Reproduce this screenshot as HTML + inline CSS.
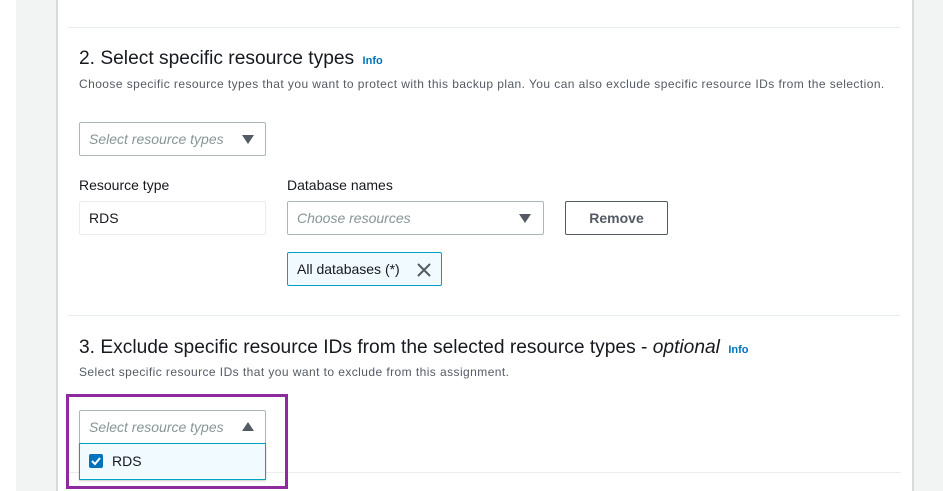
<!DOCTYPE html>
<html><head><style>
body{margin:0;width:943px;height:491px;overflow:hidden;background:#fff;font-family:"Liberation Sans",sans-serif;position:relative;color:#16191f}
.a{position:absolute}
.box{position:absolute;box-sizing:border-box;border:1px solid #aab7b8;border-radius:2px;background:#fff}
.ph{font-style:italic;color:#879596;font-size:14px;position:absolute;left:9px;top:8px}
.tri{position:absolute;width:0;height:0;border-left:6px solid transparent;border-right:6px solid transparent}
h{position:absolute;font-size:19.2px;color:#16191f;white-space:nowrap}
.info{font-size:11px;font-weight:bold;color:#0073bb}
.desc{position:absolute;font-size:12px;letter-spacing:0.43px;color:#545b64;white-space:nowrap}
.lbl{position:absolute;font-size:14px;color:#16191f}
</style></head><body>
<div class="a" style="left:16px;top:0;width:40px;height:491px;background:#f2f3f3"></div>
<div class="a" style="left:56px;top:0;width:2px;height:491px;background:#d5dbdb"></div>
<div class="a" style="left:912px;top:0;width:2px;height:491px;background:#d5dbdb"></div>
<div class="a" style="left:914px;top:0;width:29px;height:491px;background:#f2f3f3"></div>
<div class="a" style="left:68px;top:27px;width:833px;height:1px;background:#eaeded"></div>
<div class="a" style="left:68px;top:315px;width:833px;height:1px;background:#eaeded"></div>
<div class="a" style="left:68px;top:472px;width:833px;height:1px;background:#eaeded"></div>

<h style="left:79px;top:48px">2. Select specific resource types <span class="info">&nbsp;Info</span></h>
<div class="desc" style="left:79px;top:77px">Choose specific resource types that you want to protect with this backup plan. You can also exclude specific resource IDs from the selection.</div>
<div class="box" style="left:79px;top:122px;width:187px;height:34px"><span class="ph">Select resource types</span><div class="tri" style="left:162px;top:12px;border-top:9px solid #545b64"></div></div>
<div class="lbl" style="left:79px;top:177px">Resource type</div>
<div class="lbl" style="left:287px;top:177px">Database names</div>
<div class="box" style="left:79px;top:201px;width:187px;height:34px;border-color:#eaeded"><span style="position:absolute;left:9px;top:8px;font-size:14px">RDS</span></div>
<div class="box" style="left:287px;top:201px;width:257px;height:34px"><span class="ph">Choose resources</span><div class="tri" style="left:231px;top:12px;border-top:9px solid #545b64"></div></div>
<div class="box" style="left:565px;top:201px;width:103px;height:34px;border-color:#545b64"><span style="position:absolute;left:0;width:100%;text-align:center;top:8px;font-size:14px;font-weight:bold;color:#545b64">Remove</span></div>
<div class="box" style="left:287px;top:252px;width:155px;height:34px;border-color:#00a1c9;background:#f1faff"><span style="position:absolute;left:9px;top:8px;font-size:14px">All databases (*)</span>
<svg class="a" style="left:128px;top:9px" width="16" height="16"><path d="M2 2L14 14M14 2L2 14" stroke="#545b64" stroke-width="2"/></svg></div>

<h style="left:79px;top:337px">3. Exclude specific resource IDs from the selected resource types - <i>optional</i> <span class="info">&nbsp;Info</span></h>
<div class="desc" style="left:79px;top:365px">Select specific resource IDs that you want to exclude from this assignment.</div>
<div class="a" style="left:66px;top:394px;width:216px;height:89px;border:3px solid #8c2a9e"></div>
<div class="box" style="left:79px;top:410px;width:187px;height:34px"><span class="ph">Select resource types</span><div class="tri" style="left:162px;top:11px;border-bottom:9px solid #545b64"></div></div>
<div class="box" style="left:79px;top:443px;width:187px;height:37px;border-color:#00a1c9;background:#f1faff;border-radius:0;box-shadow:0 1px 2px rgba(0,0,0,.2)">
<div class="a" style="left:9px;top:10px;width:14px;height:14px;background:#0073bb;border-radius:2px"><svg width="14" height="14"><path d="M3 7L6 10L11 4" stroke="#fff" stroke-width="2" fill="none"/></svg></div>
<span style="position:absolute;left:32px;top:9px;font-size:14px">RDS</span></div>
</body></html>
